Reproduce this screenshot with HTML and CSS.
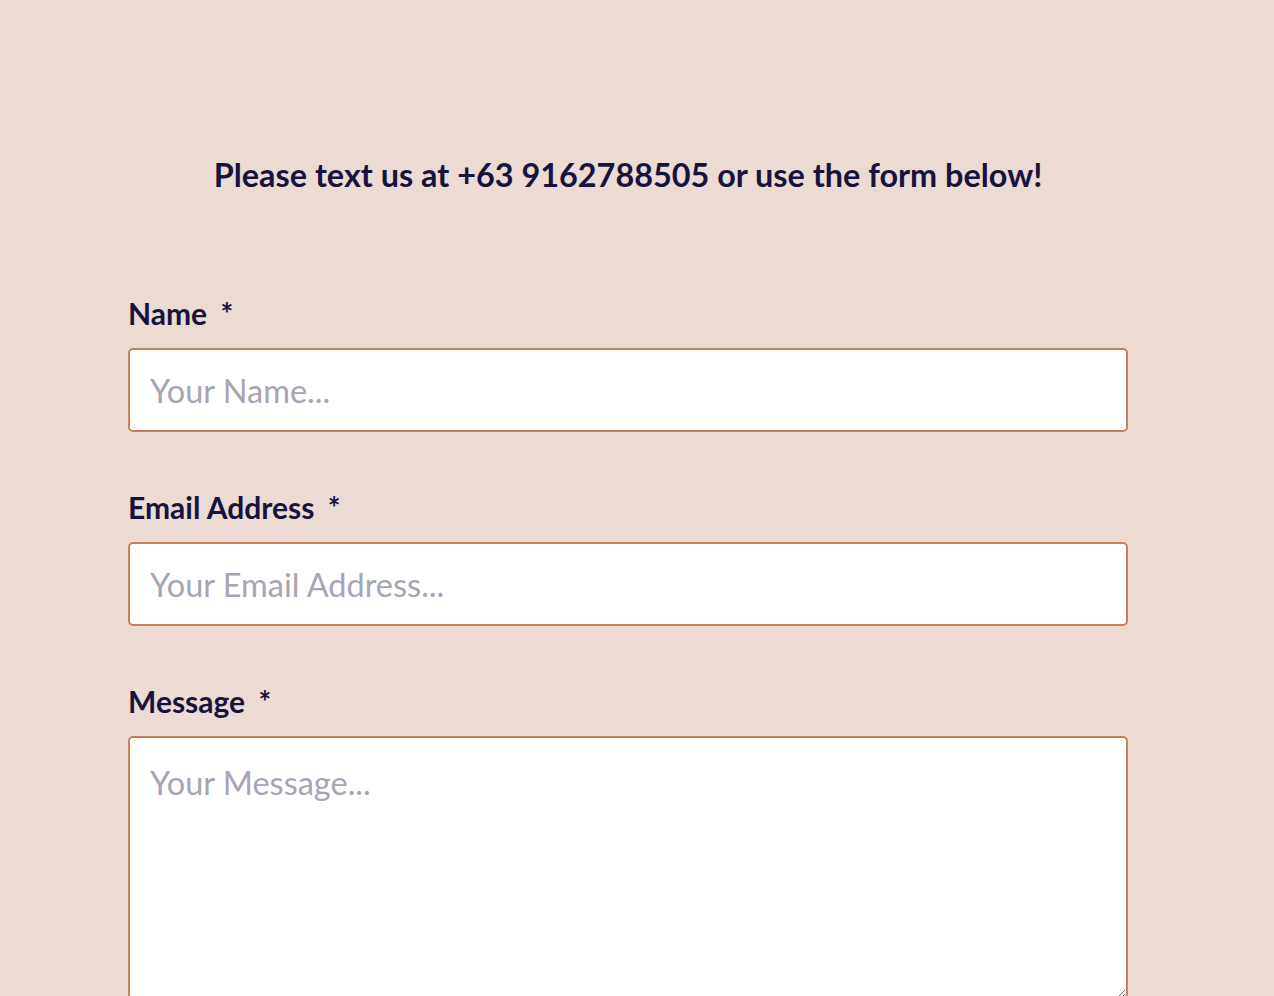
FILE: index.html
```html
<!DOCTYPE html>
<html lang="en">
<head>
<meta charset="utf-8">
<title>Contact</title>
<link rel="stylesheet" href="styles.css">
</head>
<body>
<main class="page">
  <h2 class="intro">Please text us at +63 9162788505 or use the form below!</h2>
  <form class="form">
    <div class="field">
      <label class="label" for="name">Name <span class="req">*</span></label>
      <input class="input" id="name" type="text" placeholder="Your Name...">
    </div>
    <div class="field">
      <label class="label" for="email">Email Address <span class="req">*</span></label>
      <input class="input" id="email" type="email" placeholder="Your Email Address...">
    </div>
    <div class="field">
      <label class="label" for="msg">Message <span class="req">*</span></label>
      <textarea class="input textarea" id="msg" placeholder="Your Message..."></textarea>
    </div>
  </form>
</main>
</body>
</html>
```

FILE: styles.css
```css
html, body {
  margin: 0;
  padding: 0;
  background: #ecdbd2;
}
body {
  font-family: "Lato", "Noto Sans", sans-serif;
  color: #17133f;
}
.page {
  width: 1000px;
  margin-left: 128px;
  padding-top: 155px;
}
.intro {
  margin: 0;
  text-align: center;
  font-size: 32.4px;
  font-weight: 700;
  line-height: 40px;
}
.form {
  display: flex;
  flex-direction: column;
  gap: 57px;
  margin-top: 100px;
}
.field {
  display: flex;
  flex-direction: column;
  gap: 17px;
}
.label {
  font-size: 30px;
  font-weight: 700;
  line-height: 36px;
}
.req {
  margin-left: 6px;
}
.input {
  box-sizing: border-box;
  width: 1000px;
  height: 84px;
  margin: 0;
  padding: 0 20px;
  border: 2px solid #c3825d;
  border-radius: 5px;
  background: #fff;
  font-family: "Lato", "Noto Sans", sans-serif;
  font-size: 32.5px;
  color: #17133f;
  outline: none;
}
.input::placeholder {
  color: #a7a4b5;
}
.textarea {
  height: 264px;
  padding: 25px 20px;
  resize: vertical;
  display: block;
}
```
